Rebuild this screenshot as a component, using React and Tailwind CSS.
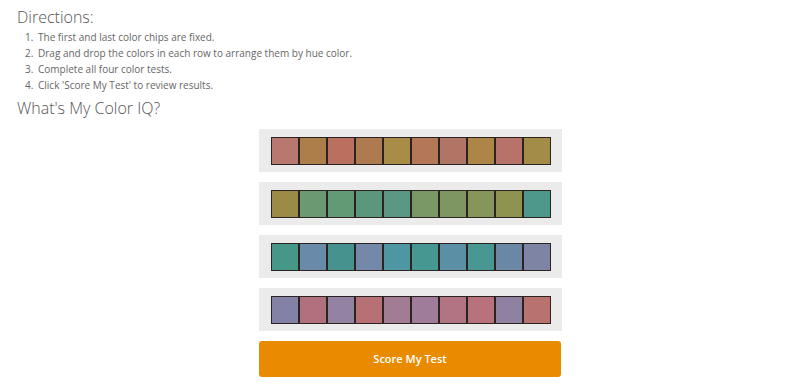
import React from 'react';

const rows = [
  ['#b87870', '#ad7d4a', '#b9705f', '#ae7a50', '#a88c47', '#b47757', '#b07565', '#ac8547', '#b7726a', '#a38c48'],
  ['#9a8c46', '#6b9a72', '#629a76', '#5b977b', '#5b9783', '#7a9866', '#7d9662', '#869559', '#8e9450', '#4d978b'],
  ['#479788', '#6a8aa9', '#46928f', '#7488aa', '#4e96a2', '#469691', '#5b8fa6', '#489793', '#6a87a6', '#7d84a4'],
  ['#8381a6', '#b1717c', '#9382a1', '#b77174', '#a27b95', '#a07c9b', '#b27482', '#b7727b', '#8f81a1', '#b9736e'],
];

const directions = [
  'The first and last color chips are fixed.',
  'Drag and drop the colors in each row to arrange them by hue color.',
  'Complete all four color tests.',
  "Click 'Score My Test' to review results.",
];

const ChipRow = ({ colors }) => (
  <div className="flex bg-[#ebebeb] pl-[12px] pr-[11px] pt-[8px] pb-[7px]">
    {colors.map((c, i) => (
      <div
        key={i}
        className="w-[28px] h-[28px] border border-[#2a2320]"
        style={{ backgroundColor: c }}
      />
    ))}
  </div>
);

export default function App() {
  return (
    <div className="w-[800px] h-[387px] bg-white overflow-hidden font-['Open_Sans',sans-serif]">
      <div className="px-[17px] pt-[5px]">
        <h2 className="text-[16px] font-light text-[#555] leading-[24px]">Directions:</h2>
        <ol className="list-decimal pl-[19px] text-[10px] text-[#666] leading-[16px]">
          {directions.map((d) => (
            <li key={d} className="pl-[2px]">{d}</li>
          ))}
        </ol>
        <h2 className="text-[16px] font-light text-[#555] leading-[24px] mt-[3px]">What's My Color IQ?</h2>
      </div>
      <div className="flex justify-center pl-[21px] mt-[9px]">
        <div className="flex flex-col gap-[10px] w-[303px]">
          {rows.map((r, i) => (
            <ChipRow key={i} colors={r} />
          ))}
          <button className="h-[36px] w-[302px] rounded-[3px] bg-[#e98b00] text-white text-[11px] font-semibold">
            Score My Test
          </button>
        </div>
      </div>
    </div>
  );
}
